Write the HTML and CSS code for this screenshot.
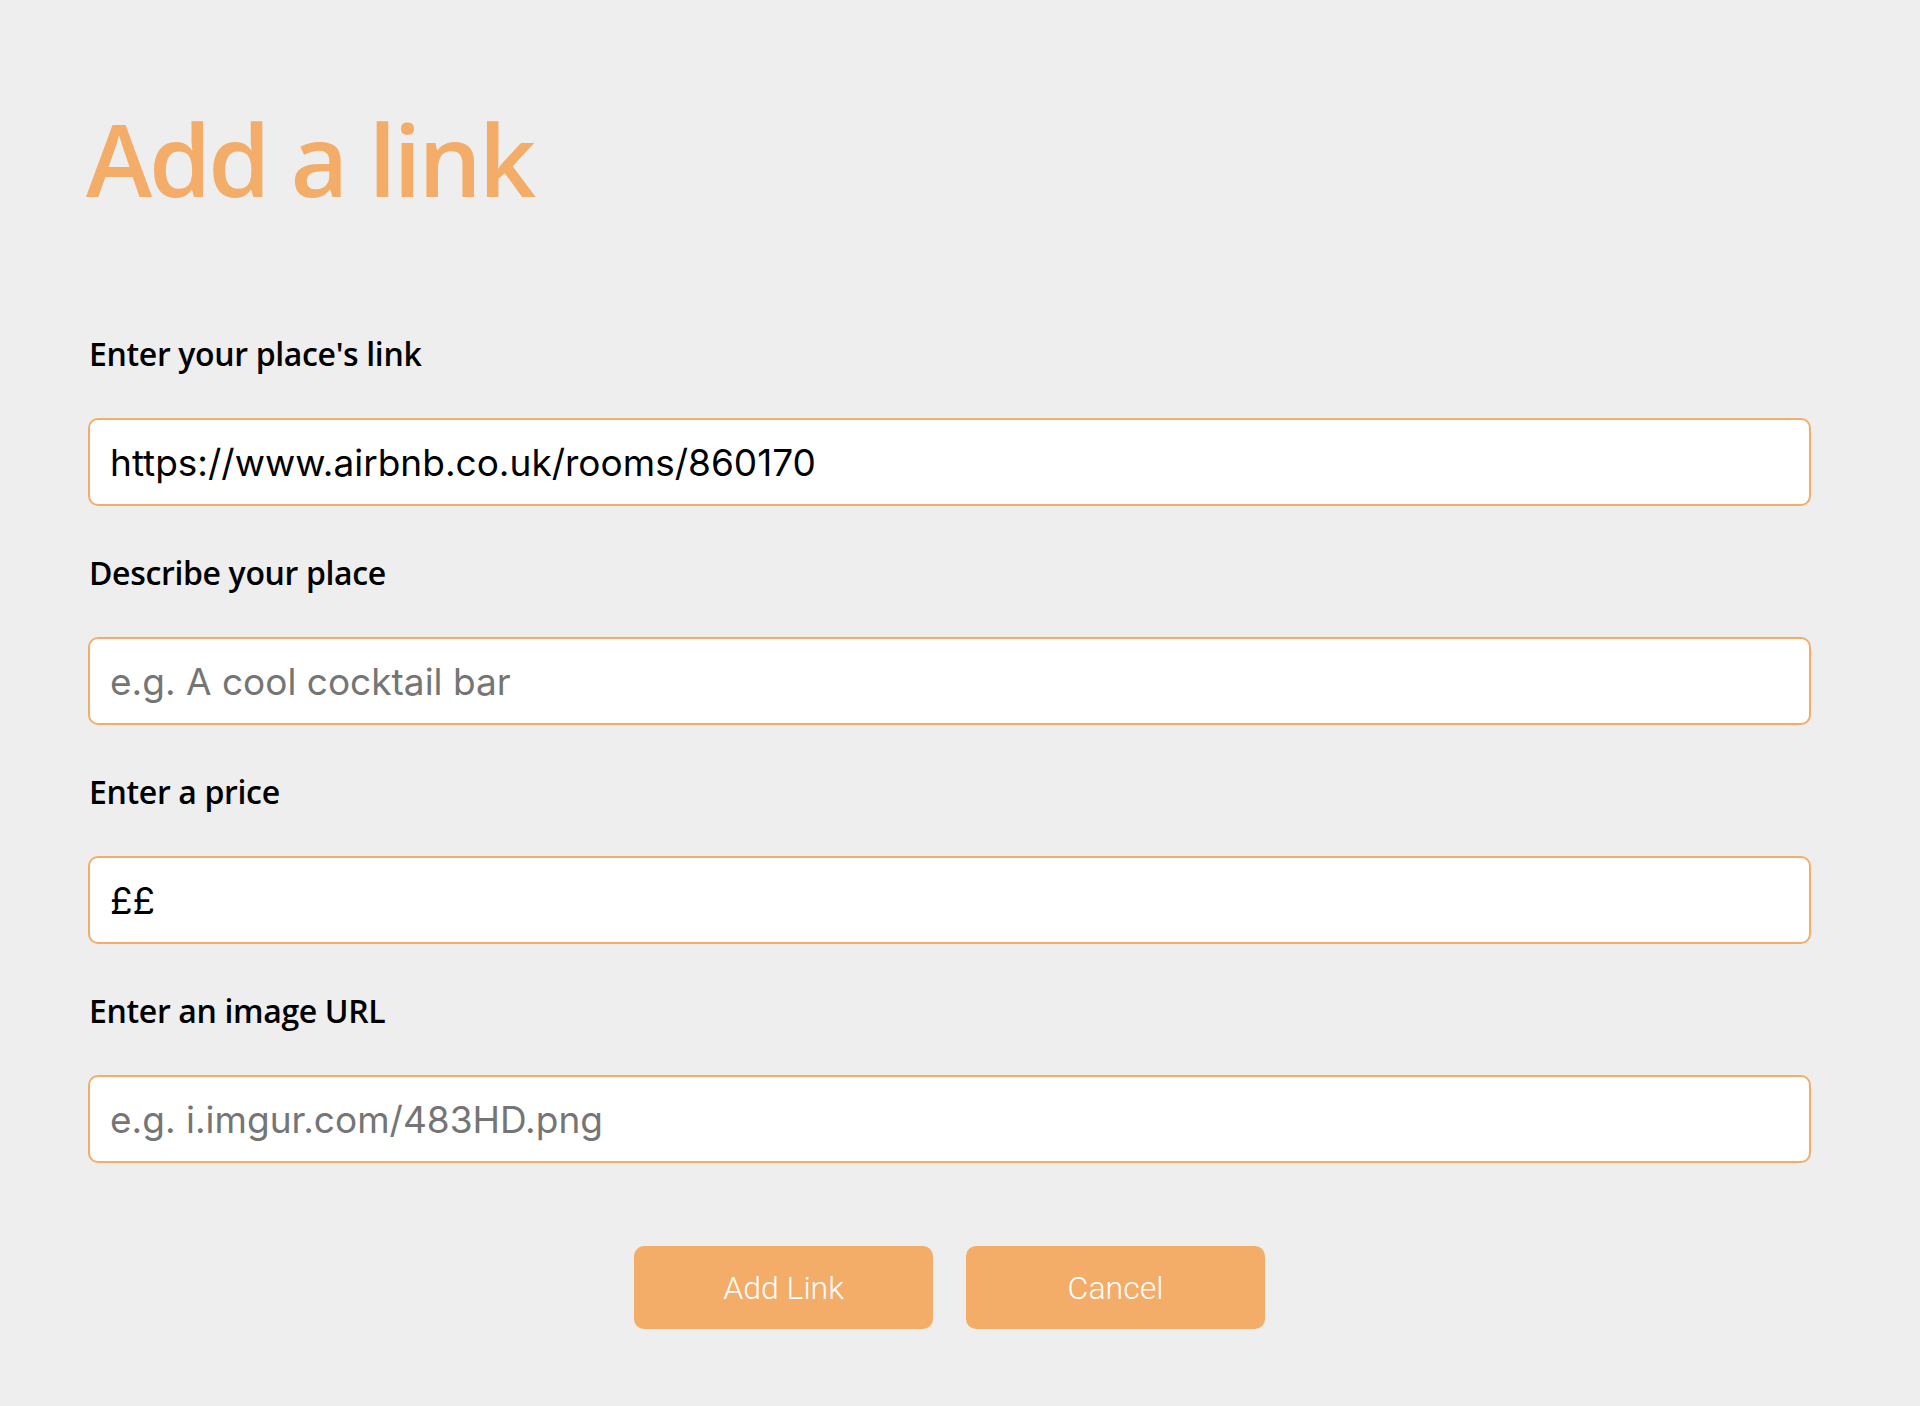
FILE: index.html
```html
<!DOCTYPE html>
<html lang="en">
<head>
<meta charset="utf-8">
<title>Add a link</title>
<link rel="stylesheet" href="styles.css">
</head>
<body>
<main class="page">
  <h1 class="title">Add a link</h1>
  <form class="form">
    <div class="field">
      <label class="label" for="link">Enter your place's link</label>
      <input class="input" id="link" type="text" value="https://www.airbnb.co.uk/rooms/860170">
    </div>
    <div class="field">
      <label class="label" for="desc">Describe your place</label>
      <input class="input" id="desc" type="text" placeholder="e.g. A cool cocktail bar">
    </div>
    <div class="field">
      <label class="label" for="price">Enter a price</label>
      <input class="input" id="price" type="text" value="££">
    </div>
    <div class="field">
      <label class="label" for="img">Enter an image URL</label>
      <input class="input" id="img" type="text" placeholder="e.g. i.imgur.com/483HD.png">
    </div>
    <div class="actions">
      <button class="btn" type="button">Add Link</button>
      <button class="btn" type="button">Cancel</button>
    </div>
  </form>
</main>
</body>
</html>
```
FILE: styles.css
```css
html, body {
  margin: 0;
  padding: 0;
  background: #eeeeee;
}

.page {
  padding: 108px 109px 40px 88px;
}

.title {
  margin: 0 0 130px -2px;
  font-family: "Open Sans", "Noto Sans", sans-serif;
  font-weight: 600;
  font-size: 100px;
  line-height: 100px;
  letter-spacing: -3px;
  color: #f3ad69;
}

.form {
  display: flex;
  flex-direction: column;
  gap: 51px;
}

.field {
  display: flex;
  flex-direction: column;
}

.label {
  font-family: "Open Sans", "Noto Sans", sans-serif;
  font-weight: 600;
  font-size: 32px;
  line-height: 32px;
  letter-spacing: -0.35px;
  color: #000;
  margin: 0 0 48px 1px;
}

.input {
  box-sizing: border-box;
  height: 88px;
  width: 100%;
  margin: 0;
  padding: 0 20px;
  border: 2px solid #f3ad69;
  border-radius: 10px;
  background: #fff;
  font-family: Inter, Roboto, "Liberation Sans", sans-serif;
  font-size: 37px;
  color: #000;
  outline: none;
}

.input::placeholder {
  color: #757575;
  opacity: 1;
}

.actions {
  display: flex;
  justify-content: center;
  gap: 33px;
  margin-top: 32px;
}

.btn {
  width: 299px;
  height: 83px;
  border: none;
  border-radius: 10px;
  background: #f3ad69;
  color: #fff;
  font-family: Roboto, "Liberation Sans", sans-serif;
  font-size: 32px;
  font-weight: 300;
  cursor: pointer;
}
```
